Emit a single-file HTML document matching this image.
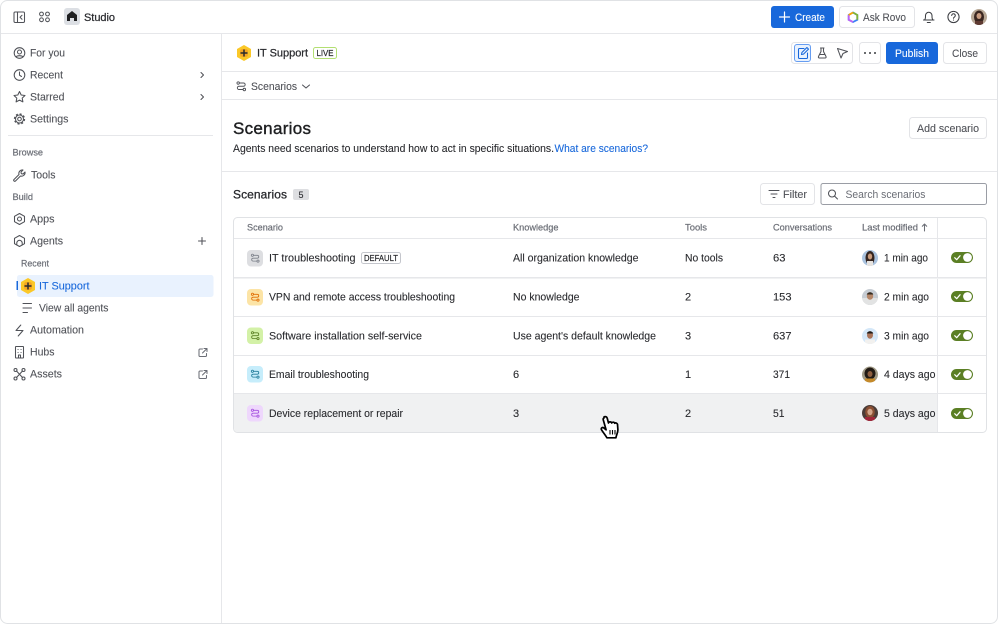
<!DOCTYPE html>
<html><head><meta charset="utf-8"><title>Studio</title>
<style>
html,body{margin:0;padding:0;background:#fff;width:998px;height:624px;overflow:hidden}
svg{display:block}
text{font-family:"Liberation Sans",sans-serif;font-size:11px;fill:#292a2e;stroke:#292a2e;stroke-width:.1px}
.n text{fill:#505258;stroke:#505258}
.h text{font-size:9.5px;fill:#6b6e76;stroke:#6b6e76;stroke-width:.2px}
.m{stroke-width:.22px}
.i{fill:none;stroke:#505258;stroke-width:1.05;stroke-linecap:round;stroke-linejoin:round}
.b{fill:#fff;stroke:#e3e4e7;stroke-width:1}
.l{stroke:#e6e7ea;stroke-width:1}
</style></head><body>
<svg width="998" height="624" viewBox="0 0 998 624" xmlns="http://www.w3.org/2000/svg">
<defs>
<g id="sc" fill="none" stroke-width="1.3" stroke-linecap="round" stroke-linejoin="round">
<circle cx="3.7" cy="3.500" r="1.700"/><circle cx="12.300" cy="12.500" r="1.700"/>
<path d="M5.400 3.500h5.800a2.250 2.250 0 0 1 0 4.500h-6.400a2.250 2.250 0 0 0 0 4.500h5.800"/>
</g>
<g id="tg"><rect width="22" height="11" rx="5.500" fill="#5b7f24"/><circle cx="16.500" cy="5.500" r="4.400" fill="#fff"/><path d="M3.700 5.700l2 2 3.400-4" fill="none" stroke="#fff" stroke-width="1.200" stroke-linecap="round" stroke-linejoin="round"/></g>
<g id="hx"><path d="M8 0l7 4v8l-7 4-7-4V4z" fill="#fbc828"/><rect x="4" y="4" width="8" height="8" rx="2.500" fill="#f5a623"/><path d="M8 4.500v7M4.500 8h7" stroke="#292a2e" stroke-width="1.500"/></g>
<g id="ext" class="i" style="stroke:#6b6e76"><path d="M4.500 1.500H2a1 1 0 0 0-1 1V8a1 1 0 0 0 1 1h5.500a1 1 0 0 0 1-1V6M4.500 5.500L9 1M6 1h3v3"/></g>
<clipPath id="a1"><circle cx="8" cy="8" r="8"/></clipPath>
</defs>
<rect x=".5" y=".5" width="997" height="623" rx="7" fill="#fff" stroke="#e0e2e5"/>
<path class="l" d="M1 33.500h996M221.500 34v589M222 71.500h775M222 99.500h775M222 171.500h775"/>
<path class="l" d="M8 135.500h205"/>

<!-- top bar -->
<g class="i">
<rect x="14" y="12" width="10.500" height="10.500" rx="1.200"/><path d="M17.500 12v10.500M22 15.300l-2 2 2 2"/>
<circle cx="41.500" cy="14" r="1.900"/><circle cx="47.500" cy="14" r="1.900"/><circle cx="41.500" cy="19.800" r="1.900"/><circle cx="47.500" cy="19.800" r="1.900"/>
</g>
<rect x="64" y="8" width="16" height="17" rx="3" fill="#dcdfe4"/>
<path d="M72 11l5 4v6h-3v-3h-4v3h-3v-6z" fill="#1e1f21"/>
<text x="84" y="21" textLength="31" lengthAdjust="spacing" class="m">Studio</text>

<rect x="771" y="6" width="63" height="22" rx="3" fill="#1868db"/>
<path d="M784.500 12v10M779.500 17h10" stroke="#fff" stroke-width="1.200" stroke-linecap="round"/>
<text x="795" y="21" textLength="30" lengthAdjust="spacingAndGlyphs" style="fill:#fff;stroke:#fff">Create</text>
<rect class="b" x="839.500" y="6.500" width="75" height="21" rx="3"/>
<path d="M853 12.500l4.300 2.500v4.800L853 22l-4.300-2.200V15z" fill="none" stroke="#3b82f6" stroke-width="1.800"/>
<path d="M853 12.500l4.300 2.500v4.800" fill="none" stroke="#82b536" stroke-width="1.800"/>
<path d="M848.700 15v4.800L853 22" fill="none" stroke="#bf63f3" stroke-width="1.800"/>
<path d="M853 12.500L848.700 15" fill="none" stroke="#fca700" stroke-width="1.800"/>
<text x="863" y="21" textLength="43" lengthAdjust="spacingAndGlyphs" style="fill:#505258;stroke:#505258">Ask Rovo</text>
<g class="i" style="stroke:#3b3d42">
<path d="M923.500 20h10.500M924.500 20c1.200-1.200 1-3 1-4.500a3.200 3.200 0 0 1 6.500 0c0 1.500-.2 3.300 1 4.500M927.300 22.500h3"/>
<circle cx="953.500" cy="17" r="5.600"/><path d="M951.700 15.500a1.800 1.800 0 1 1 2.700 1.600c-.6.300-.9.600-.9 1.200M953.500 20v.1"/>
</g>
<g transform="translate(971,9)"><g clip-path="url(#a1)"><rect width="16" height="16" fill="#b8a896"/><ellipse cx="8" cy="8" rx="5" ry="6.500" fill="#3a2620"/><ellipse cx="8" cy="7" rx="2.500" ry="3" fill="#c99c80"/><rect x="4" y="12" width="8" height="5" fill="#5e3a32"/></g></g>

<!-- sidebar -->
<g class="n">
<text x="30" y="56.500" textLength="35" lengthAdjust="spacingAndGlyphs">For you</text>
<text x="30" y="78.500" textLength="33" lengthAdjust="spacingAndGlyphs">Recent</text>
<text x="30" y="100.500" textLength="34.500" lengthAdjust="spacingAndGlyphs">Starred</text>
<text x="30" y="122.500" textLength="38.500" lengthAdjust="spacingAndGlyphs">Settings</text>
<text x="31" y="178.500" textLength="24.500" lengthAdjust="spacingAndGlyphs">Tools</text>
<text x="30" y="222.500" textLength="24.500" lengthAdjust="spacingAndGlyphs">Apps</text>
<text x="30" y="244.500" textLength="33" lengthAdjust="spacingAndGlyphs">Agents</text>
<text x="39" y="311.500" textLength="69.500" lengthAdjust="spacingAndGlyphs">View all agents</text>
<text x="30" y="333.500" textLength="54" lengthAdjust="spacingAndGlyphs">Automation</text>
<text x="30" y="355.500" textLength="24.500" lengthAdjust="spacingAndGlyphs">Hubs</text>
<text x="30" y="377.500" textLength="32" lengthAdjust="spacingAndGlyphs">Assets</text>
</g>
<g class="h">
<text x="12.500" y="155.500" textLength="30.500" lengthAdjust="spacingAndGlyphs">Browse</text>
<text x="12.500" y="200" textLength="20.500" lengthAdjust="spacingAndGlyphs">Build</text>
<text x="21" y="266.500" textLength="28" lengthAdjust="spacingAndGlyphs">Recent</text>
</g>
<rect x="17" y="275" width="196.500" height="22" rx="2.500" fill="#e9f2fe"/>
<rect x="16.500" y="281" width="1.500" height="9" fill="#1868db"/>
<use href="#hx" x="20" y="278"/>
<text x="39" y="289.500" textLength="50.500" lengthAdjust="spacingAndGlyphs" style="fill:#1868db;stroke:#1868db">IT Support</text>
<g class="i">
<circle cx="19.500" cy="53" r="5.300"/><circle cx="19.500" cy="52" r="2"/><path d="M16.200 56.800c1-1.500 5.600-1.500 6.600 0"/>
<circle cx="19.500" cy="75" r="5.300"/><path d="M19.500 72v3.200l2 1.300"/>
<path d="M19.500 91.500l1.700 3.500 3.800.5-2.800 2.600.7 3.800-3.400-1.800-3.400 1.800.7-3.800-2.800-2.600 3.800-.5z"/>
<circle cx="19.500" cy="119" r="1.800"/><circle cx="19.500" cy="119" r="4"/>
<circle cx="19.500" cy="119" r="4.900" stroke-width="1.500" stroke-dasharray="2 1.850" stroke-linecap="butt"/>
<path d="M14.500 179.500l5-5a3.500 3.500 0 0 1 4-4.500l-2 2 .3 1.700 1.700.3 2-2a3.500 3.500 0 0 1-4.500 4l-5 5a1 1 0 0 1-1.500-1.500z" transform="translate(-.5 0)"/>
<path d="M19.500 213.500l5 2.800v5.400l-5 2.800-5-2.800v-5.400z"/><circle cx="19.500" cy="219" r="2"/>
<path d="M19.500 235.500l5 2.800v5.400l-5 2.800-5-2.800v-5.400z"/><path d="M16.800 245v-2a2.700 2.700 0 0 1 5.400 0v2" />
<path d="M23 303.500h8.500M23 308h8.500M23 312.500h4.500"/>
<path d="M20.800 325l-4.800 5.500h7l-4.800 5.500"/>
<rect x="15.500" y="346.500" width="8" height="11.500" rx=".5"/><path d="M18 349.500h.1M21 349.500h.1M18 352.500h.1M21 352.500h.1M18.500 358v-3h2v3"/>
<circle cx="15.500" cy="370" r="1.500"/><circle cx="23.500" cy="370" r="1.500"/><circle cx="15.500" cy="378.500" r="1.500"/><circle cx="23.500" cy="378.500" r="1.500"/><path d="M16.500 371l6 6.500M22.500 371l-6 6.500"/>
<path d="M201 72.500l2.500 2.500-2.500 2.500M201 94.500l2.500 2.500-2.500 2.500M202 237.500v7M198.500 241h7"/>
</g>
<use href="#ext" x="198" y="347.500"/><use href="#ext" x="198" y="369.500"/>

<!-- agent header -->
<use href="#hx" x="236" y="45"/>
<text x="257" y="56.500" textLength="51" lengthAdjust="spacing" class="m">IT Support</text>
<rect x="313.500" y="47.500" width="23" height="11" rx="2" fill="#fff" stroke="#b3df72"/>
<text x="316.500" y="56" textLength="17" lengthAdjust="spacingAndGlyphs" style="font-size:8.500px" class="m">LIVE</text>
<rect class="b" x="791.500" y="42.500" width="61" height="21" rx="3"/>
<rect x="794.500" y="44.500" width="16" height="17" rx="2.500" fill="#e9f2fe" stroke="#669df1"/>
<g class="i" style="stroke:#1868db"><path d="M804 48.500h-4.500a1 1 0 0 0-1 1v8a1 1 0 0 0 1 1h7a1 1 0 0 0 1-1V53M801.500 54.500l.4-2 5-5 1.600 1.600-5 5z"/></g>
<g class="i"><path d="M820.500 48h3.500M821 48v3.500l-2.500 5a1 1 0 0 0 1 1.500h5.500a1 1 0 0 0 1-1.500l-2.500-5V48M819.500 54.500h5.500"/>
<path d="M837.500 48.500l10 3-4.500 2-2 4.500z"/></g>
<rect class="b" x="859.500" y="42.500" width="21" height="21" rx="3"/>
<g fill="#3b3d42"><circle cx="865" cy="53" r="1"/><circle cx="870" cy="53" r="1"/><circle cx="875" cy="53" r="1"/></g>
<rect x="886" y="42" width="52" height="22" rx="3" fill="#1868db"/>
<text x="895" y="57" textLength="34" lengthAdjust="spacingAndGlyphs" style="fill:#fff;stroke:#fff">Publish</text>
<rect class="b" x="943.500" y="42.500" width="43" height="21" rx="3"/>
<text x="952" y="57" textLength="26" lengthAdjust="spacingAndGlyphs" style="fill:#505258;stroke:#505258">Close</text>

<use href="#sc" transform="translate(235.500,80.500) scale(.72)" style="stroke:#505258"/>
<text x="251" y="90" textLength="46" lengthAdjust="spacingAndGlyphs" style="fill:#505258;stroke:#505258">Scenarios</text>
<path class="i" d="M302.500 85l3.500 3 3.500-3"/>

<text x="233" y="134" textLength="78" lengthAdjust="spacing" style="font-size:17px;fill:#1e1f21;stroke:#1e1f21;stroke-width:.4px">Scenarios</text>
<text x="233" y="152" textLength="321" lengthAdjust="spacingAndGlyphs">Agents need scenarios to understand how to act in specific situations.</text>
<text x="554.500" y="152" textLength="93.500" lengthAdjust="spacingAndGlyphs" style="fill:#1868db;stroke:#1868db">What are scenarios?</text>
<rect class="b" x="909.500" y="117.500" width="77" height="21" rx="3"/>
<text x="917" y="132" textLength="62" lengthAdjust="spacingAndGlyphs" style="fill:#505258;stroke:#505258">Add scenario</text>

<text x="233" y="198.500" textLength="54" lengthAdjust="spacing" style="font-size:12px;stroke-width:.3px">Scenarios</text>
<rect x="293" y="189" width="16" height="11" rx="2" fill="#dddee1"/>
<text x="298.500" y="197.800" textLength="5" lengthAdjust="spacingAndGlyphs" style="font-size:9px">5</text>
<rect class="b" x="760.500" y="183.500" width="54" height="21" rx="3"/>
<path class="i" d="M769 190.500h10M771 194h6M773 197.500h2"/>
<text x="783" y="198" textLength="24" lengthAdjust="spacingAndGlyphs" style="fill:#505258;stroke:#505258">Filter</text>
<rect x="821" y="183.500" width="165.500" height="21" rx="2" fill="#fff" stroke="#9a9da5"/>
<circle class="i" cx="832" cy="193.500" r="3.500"/><path class="i" d="M834.700 196.200l2.800 2.800"/>
<text x="845.500" y="198" textLength="80" lengthAdjust="spacingAndGlyphs" style="fill:#6b6e76;stroke:none">Search scenarios</text>

<!-- table -->
<path d="M234 394h703.500V432H238a4 4 0 0 1-4-4z" fill="#f0f1f2"/>
<rect x="233.500" y="217.500" width="753" height="215" rx="4" fill="none" stroke="#e0e2e5"/>
<path class="l" d="M234 238.500h752M234 277.500h752M234 316.500h752M234 355.500h752M234 393.500h752M937.500 218v214"/>
<path d="M234 278.500h752" stroke="#f1f2f3"/>
<g class="h">
<text x="247" y="230.500" textLength="36" lengthAdjust="spacingAndGlyphs">Scenario</text>
<text x="513" y="230.500" textLength="45.500" lengthAdjust="spacingAndGlyphs">Knowledge</text>
<text x="685" y="230.500" textLength="22" lengthAdjust="spacingAndGlyphs">Tools</text>
<text x="773" y="230.500" textLength="59" lengthAdjust="spacingAndGlyphs">Conversations</text>
<text x="862" y="230.500" textLength="56" lengthAdjust="spacingAndGlyphs">Last modified</text>
</g>
<path class="i" style="stroke:#6b6e76" d="M924.500 231v-7M922.300 226.200l2.200-2.200 2.200 2.200"/>

<rect x="247" y="250" width="16" height="16.500" rx="4" fill="#dddee1"/><use href="#sc" transform="translate(250,253) scale(.65)" style="stroke:#7d818a"/>
<rect x="247" y="289" width="16" height="16.500" rx="4" fill="#fce4a6"/><use href="#sc" transform="translate(250,292) scale(.65)" style="stroke:#e06c00"/>
<rect x="247" y="327.500" width="16" height="16.500" rx="4" fill="#d3f1a7"/><use href="#sc" transform="translate(250,330.500) scale(.65)" style="stroke:#5b7f24"/>
<rect x="247" y="366" width="16" height="16.500" rx="4" fill="#c6edfb"/><use href="#sc" transform="translate(250,369) scale(.65)" style="stroke:#227d9b"/>
<rect x="247" y="405" width="16" height="16.500" rx="4" fill="#eed7fc"/><use href="#sc" transform="translate(250,408) scale(.65)" style="stroke:#a54fe0"/>

<text x="269" y="261.500" textLength="86.500" lengthAdjust="spacingAndGlyphs">IT troubleshooting</text>
<rect x="361.500" y="252.500" width="39" height="11" rx="2" fill="#fff" stroke="#c4c6cc"/>
<text x="364" y="261" textLength="34" lengthAdjust="spacingAndGlyphs" style="font-size:8.500px" class="m">DEFAULT</text>
<text x="269" y="300.500" textLength="186" lengthAdjust="spacingAndGlyphs">VPN and remote access troubleshooting</text>
<text x="269" y="339.500" textLength="153" lengthAdjust="spacingAndGlyphs">Software installation self-service</text>
<text x="269" y="378" textLength="100" lengthAdjust="spacingAndGlyphs">Email troubleshooting</text>
<text x="269" y="417" textLength="134" lengthAdjust="spacingAndGlyphs">Device replacement or repair</text>

<text x="513" y="261.500" textLength="125.500" lengthAdjust="spacingAndGlyphs">All organization knowledge</text>
<text x="513" y="300.500" textLength="66.500" lengthAdjust="spacingAndGlyphs">No knowledge</text>
<text x="513" y="339.500" textLength="143" lengthAdjust="spacingAndGlyphs">Use agent's default knowledge</text>
<text x="513" y="378">6</text>
<text x="513" y="417">3</text>

<text x="685" y="261.500" textLength="38" lengthAdjust="spacingAndGlyphs">No tools</text>
<text x="685" y="300.500">2</text><text x="685" y="339.500">3</text><text x="685" y="378">1</text><text x="685" y="417">2</text>

<text x="773" y="261.500" textLength="12.500" lengthAdjust="spacingAndGlyphs">63</text>
<text x="773" y="300.500" textLength="18.500" lengthAdjust="spacingAndGlyphs">153</text>
<text x="773" y="339.500" textLength="18.500" lengthAdjust="spacingAndGlyphs">637</text>
<text x="773" y="378" textLength="17" lengthAdjust="spacingAndGlyphs">371</text>
<text x="773" y="417" textLength="11.500" lengthAdjust="spacingAndGlyphs">51</text>

<g transform="translate(862,250)"><g clip-path="url(#a1)"><rect width="16" height="16" fill="#a9c2de"/><ellipse cx="8" cy="8" rx="4.500" ry="7" fill="#33241f"/><ellipse cx="8" cy="6.500" rx="2.200" ry="3" fill="#c79a7c"/><rect x="5" y="11" width="6" height="5" fill="#e8e4e0"/></g></g>
<g transform="translate(862,289)"><g clip-path="url(#a1)"><rect width="16" height="16" fill="#c6ccd3"/><rect y="9" width="16" height="7" fill="#e2e3e3"/><ellipse cx="8" cy="7" rx="3.200" ry="3.800" fill="#b5876a"/><path d="M4.700 5.500c1-3 5.600-3 6.600 0z" fill="#33291f"/></g></g>
<g transform="translate(862,328)"><g clip-path="url(#a1)"><rect width="16" height="16" fill="#d4e7f8"/><rect x="3" y="11.500" width="10" height="5" fill="#f2f1ef"/><ellipse cx="8" cy="7" rx="3" ry="3.800" fill="#a9745a"/><path d="M4.700 5.500c1-3 5.600-3 6.600 0z" fill="#1f1a18"/></g></g>
<g transform="translate(862,366.500)"><g clip-path="url(#a1)"><rect width="16" height="16" fill="#a09a86"/><ellipse cx="8" cy="7" rx="5.500" ry="6" fill="#211a14"/><ellipse cx="8" cy="7.500" rx="2.500" ry="3" fill="#8d5e3f"/><rect x="3" y="12" width="10" height="5" fill="#c58a2a"/></g></g>
<g transform="translate(862,405)"><g clip-path="url(#a1)"><rect width="16" height="16" fill="#4a3c38"/><ellipse cx="8" cy="7" rx="4.800" ry="6" fill="#8a4f33"/><ellipse cx="8" cy="7" rx="2.600" ry="3.200" fill="#d3a58a"/><rect x="3" y="12" width="10" height="5" fill="#a0263a"/></g></g>

<text x="884" y="261.500" textLength="44" lengthAdjust="spacingAndGlyphs">1 min ago</text>
<text x="884" y="300.500" textLength="45" lengthAdjust="spacingAndGlyphs">2 min ago</text>
<text x="884" y="339.500" textLength="45" lengthAdjust="spacingAndGlyphs">3 min ago</text>
<text x="884" y="378" textLength="51.500" lengthAdjust="spacingAndGlyphs">4 days ago</text>
<text x="884" y="417" textLength="51.500" lengthAdjust="spacingAndGlyphs">5 days ago</text>

<use href="#tg" x="951" y="252"/><use href="#tg" x="951" y="291"/><use href="#tg" x="951" y="330"/><use href="#tg" x="951" y="369"/><use href="#tg" x="951" y="408"/>

<!-- cursor -->
<path d="M604 417c1.500-1 3 0 3.300 1.500l1.200 4.500c.3-1.500 2.700-1.500 3.200 0 .5-1.200 2.600-1 3 .3.800-.8 2.400-.3 2.800 1l.4 5.500c0 3-1.500 5-2 8h-9c-1-2-3.500-5-5.400-8-.8-1.500.8-3 2.200-2l2.400 2-2.800-9.800c-.3-.9 0-1.700.7-2z" fill="#fff" stroke="#000" stroke-width="1.700" stroke-linejoin="round"/>
<path d="M610 430v4.500M612.500 430v4.500M615 430v4.500" stroke="#000" stroke-width="1.100"/>
</svg>
</body></html>
